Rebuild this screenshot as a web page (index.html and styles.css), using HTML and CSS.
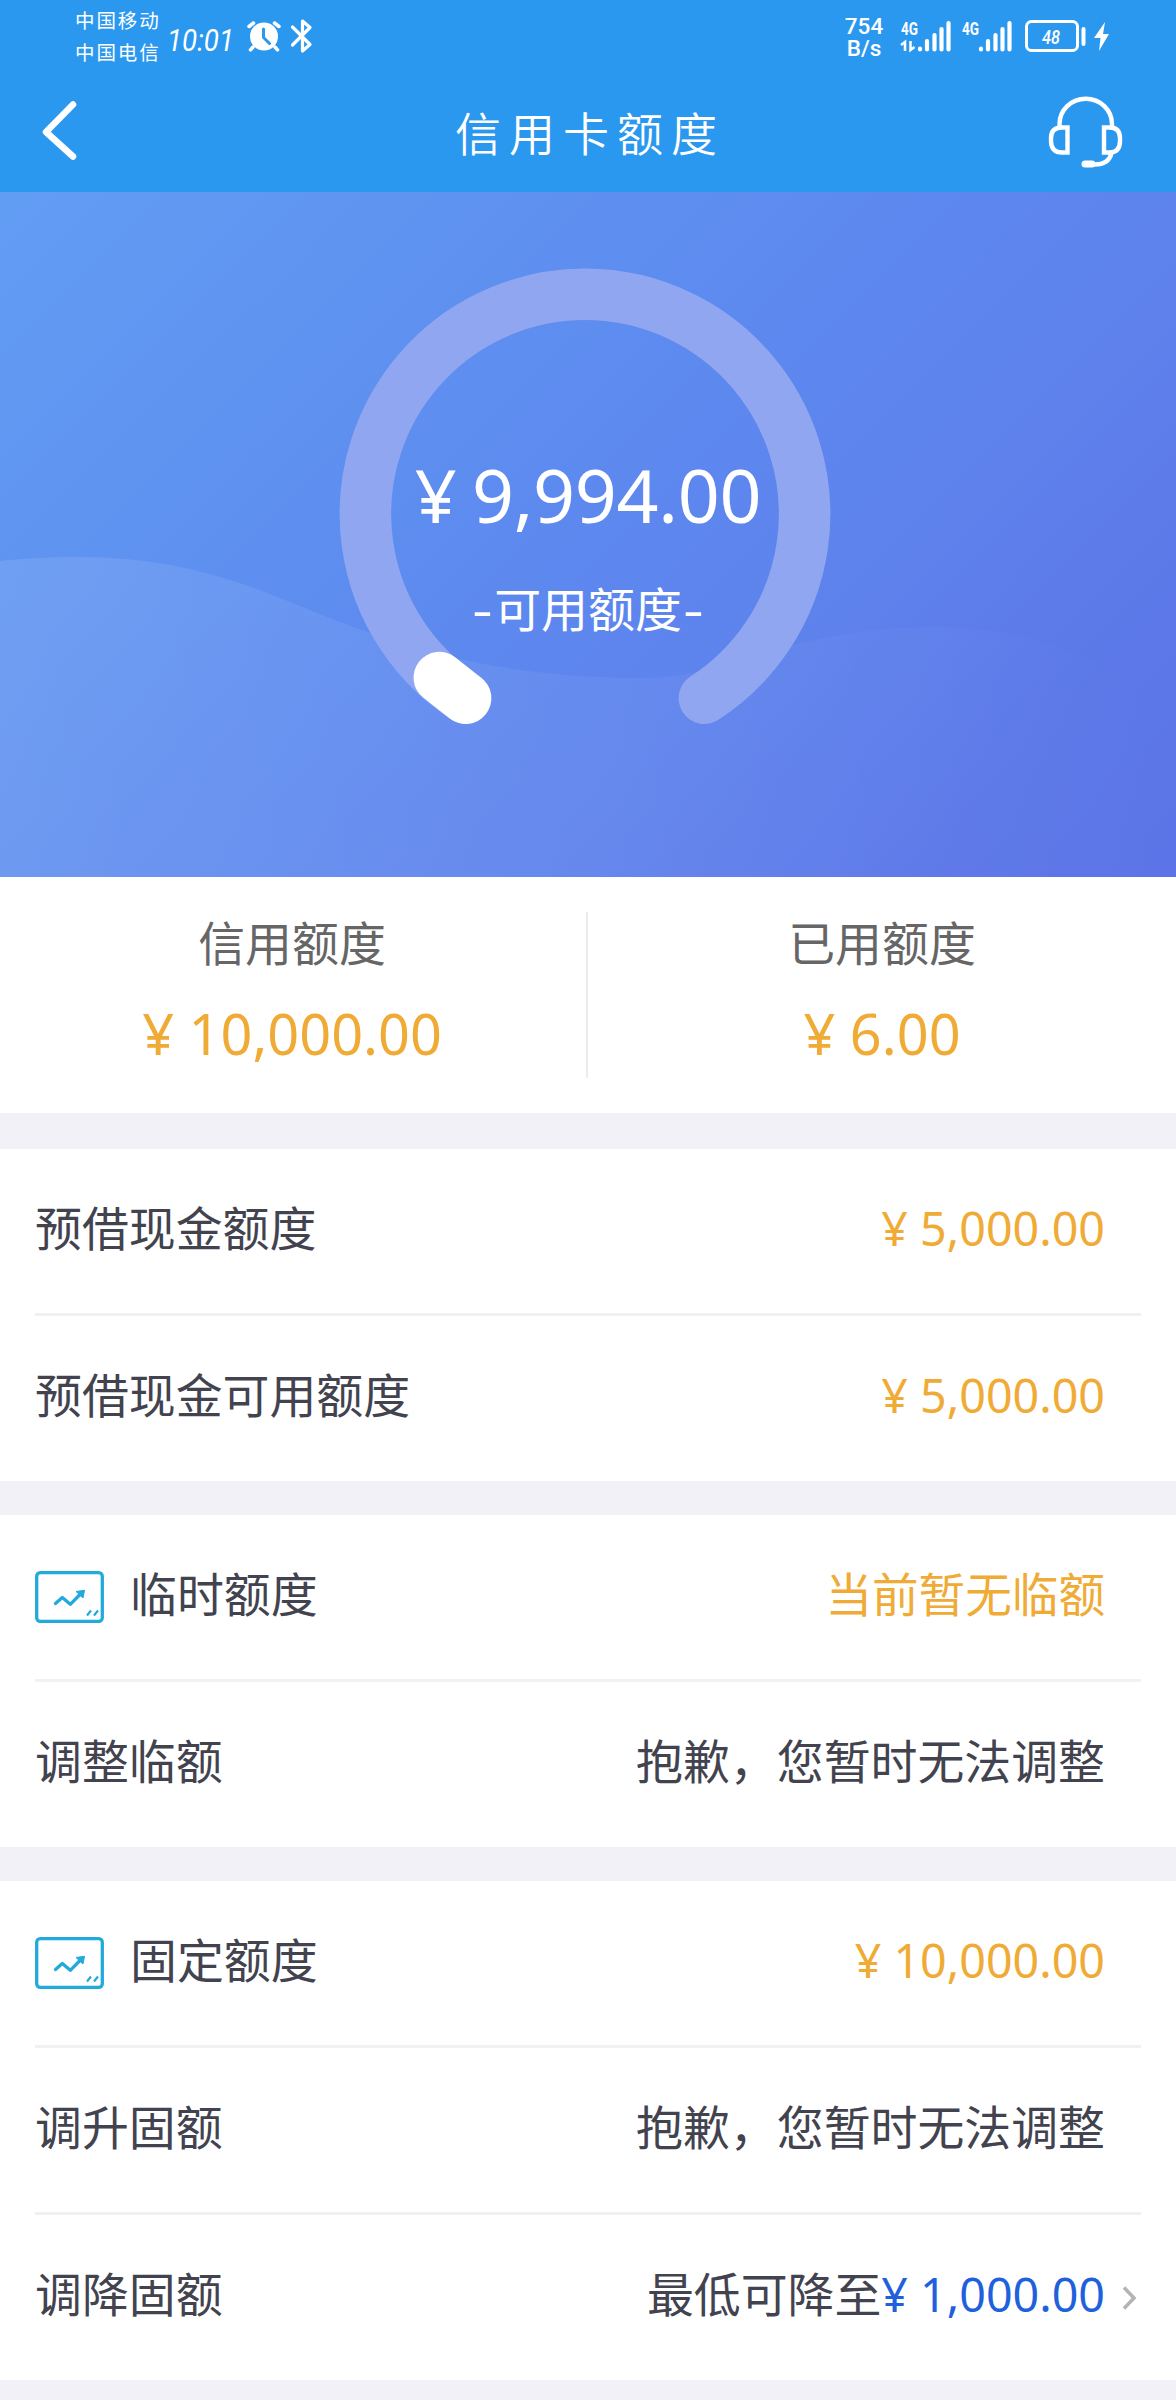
FILE: index.html
```html
<!DOCTYPE html>
<html lang="zh-CN">
<head>
<meta charset="utf-8">
<title>信用卡额度</title>
<link rel="stylesheet" href="styles.css">
</head>
<body>
<header class="top">
  <div class="status">
    <div class="carriers"><span>中国移动</span><span>中国电信</span></div>
    <svg class="clock" width="70" height="40"><text x="1" y="30" textLength="67" lengthAdjust="spacingAndGlyphs">10:01</text></svg>
    <svg class="alarm" width="34" height="32" viewBox="0 0 34 32"><circle cx="17" cy="16.500" r="14" fill="#fff"/><path d="M2 6.500l4.500-3.500M32 6.500l-4.500-3.500M6 27l-2.500 2.800M28 27l2.500 2.800" stroke="#fff" stroke-width="3.500" stroke-linecap="round"/><path d="M16.500 9v8.500l6 6" fill="none" stroke="#2b98f0" stroke-width="3" stroke-linecap="round"/></svg>
    <svg class="bluetooth" width="24" height="36" viewBox="0 0 24 36"><path d="M2.500 9L20 26.500 12.500 33V3L20 9.500 2.500 27" fill="none" stroke="#fff" stroke-width="3.200" stroke-linecap="round" stroke-linejoin="round"/></svg>
    <div class="speed"><span>754</span><span>B/s</span></div>
    <svg class="signal" width="52" height="38" viewBox="0 -4 52 38"><text x="1" y="15" textLength="17" lengthAdjust="spacingAndGlyphs">4G</text><path d="M1 25l4-3v9M10.500 21v9l4-3" fill="none" stroke="#fff" stroke-width="2.500"/><path d="M20 28.500v1M27 21v8.500M34.500 15v14.500M41.500 9v20.500M48.500 3v26.500" stroke="#fff" stroke-width="4.200" stroke-linecap="round"/></svg>
    <svg class="signal second" width="52" height="38" viewBox="0 -4 52 38"><text x="1" y="15" textLength="17" lengthAdjust="spacingAndGlyphs">4G</text><path d="M20 28.500v1M27 21v8.500M34.500 15v14.500M41.500 9v20.500M48.500 3v26.500" stroke="#fff" stroke-width="4.200" stroke-linecap="round"/></svg>
    <svg class="battery" width="86" height="34" viewBox="0 0 86 34"><rect x="1.500" y="2.500" width="51" height="29" rx="5" fill="none" stroke="#fff" stroke-width="3"/><path d="M58.500 10v15" stroke="#fff" stroke-width="4" stroke-linecap="round"/><path d="M80 3L69 19h6.500L74 32l10-17h-6z" fill="#fff"/><text x="17" y="25" textLength="18" lengthAdjust="spacingAndGlyphs">48</text></svg>
  </div>
  <nav class="nav">
    <svg class="back" width="40" height="66" viewBox="0 0 40 66"><path d="M34 6.500L7 34 34 58.500" fill="none" stroke="#fff" stroke-width="6.500" stroke-linecap="round" stroke-linejoin="round"/></svg>
    <h1>信用卡额度</h1>
    <svg class="service" width="76" height="72" viewBox="0 0 76 72" fill="none" stroke="#fff" stroke-width="4.400"><path d="M11.500 29v-2a26 25 0 0 1 52.500 0v2"/><path d="M19.500 30.500v25H14Q3 55.500 3 44v-3Q3 30.500 14 30.500zM56 30.500v25h5.500Q72 55.500 72 44v-3Q72 30.500 61.500 30.500z"/><path d="M63.500 56c-2 9-9 11.500-17 11.500"/><path d="M37 67h7" stroke-width="7" stroke-linecap="round"/></svg>
  </nav>
</header>

<section class="hero">
  <svg class="hero-art" width="1176" height="685" viewBox="0 0 1176 685">
    <defs>
      <linearGradient id="wave"><stop offset="0" stop-color="#fff" stop-opacity=".1"/><stop offset=".45" stop-color="#fff" stop-opacity=".055"/><stop offset="1" stop-color="#fff" stop-opacity="0"/></linearGradient>
    </defs>
    <path d="M0 369C130 357 200 373 300 414C395 453 490 486 640 486C740 486 780 435 940 435C1040 435 1110 480 1176 500V685H0z" fill="url(#wave)"/>
    <path d="M465.600 506.200A219.600 219.600 0 1 1 704.400 506.200" fill="none" stroke="#91a6f1" stroke-width="51.500" stroke-linecap="round"/>
    <path d="M465.600 506.200L439.300 485.600" fill="none" stroke="#fff" stroke-width="51.500" stroke-linecap="round"/>
  </svg>
  <div class="available">
    <strong>¥ <span class="figure">9,994.00</span></strong>
    <span class="caption"><i>-</i>可用额度<i>-</i></span>
  </div>
</section>

<section class="summary">
  <div class="total"><span>信用额度</span><b>¥ 10,000.00</b></div>
  <div class="total"><span>已用额度</span><b>¥ 6.00</b></div>
</section>

<section class="group">
  <div class="row"><span>预借现金额度</span><span class="gold">¥ 5,000.00</span></div>
  <div class="row"><span>预借现金可用额度</span><span class="gold">¥ 5,000.00</span></div>
</section>

<section class="group">
  <div class="row">
    <span class="label"><svg width="69" height="52" viewBox="0 0 69 52" fill="none" stroke="#22aadb" stroke-width="3.300"><rect x="1.700" y="1.700" width="65.600" height="48.600" rx="3.500"/><path d="M20.500 32.500L27.300 26.500 35.300 33.300 45 23.500" stroke-linecap="round" stroke-linejoin="round"/><path d="M41 20.500l8.500-1.200-1.500 7.700z" fill="#22aadb" stroke="#22aadb" stroke-width="1"/><path d="M52 44.500l4-5M59 44.500l4-5" stroke-width="2.200"/></svg>临时额度</span>
    <span class="gold">当前暂无临额</span>
  </div>
  <div class="row"><span>调整临额</span><span>抱歉，您暂时无法调整</span></div>
</section>

<section class="group fixed">
  <div class="row">
    <span class="label"><svg width="69" height="52" viewBox="0 0 69 52" fill="none" stroke="#22aadb" stroke-width="3.300"><rect x="1.700" y="1.700" width="65.600" height="48.600" rx="3.500"/><path d="M20.500 32.500L27.300 26.500 35.300 33.300 45 23.500" stroke-linecap="round" stroke-linejoin="round"/><path d="M41 20.500l8.500-1.200-1.500 7.700z" fill="#22aadb" stroke="#22aadb" stroke-width="1"/><path d="M52 44.500l4-5M59 44.500l4-5" stroke-width="2.200"/></svg>固定额度</span>
    <span class="gold">¥ 10,000.00</span>
  </div>
  <div class="row"><span>调升固额</span><span>抱歉，您暂时无法调整</span></div>
  <div class="row link"><span>调降固额</span><span>最低可降至<em>¥ 1,000.00</em></span><svg class="chevron" width="16" height="26" viewBox="0 0 16 26"><path d="M3 2.500L13 13 3 23.500" fill="none" stroke="#b4b4b6" stroke-width="3.500"/></svg></div>
</section>
</body>
</html>
```
FILE: styles.css
```css
* { box-sizing: border-box; }

body {
  margin: 0;
  width: 1176px;
  height: 2400px;
  overflow: hidden;
  background: #f1f1f7;
  color: #42434f;
  font: 46.900px/1.2 "Noto Sans", "Noto Sans CJK SC", sans-serif;
}

svg { display: block; flex: none; overflow: visible; }

.top { height: 192px; background: #2b98f0; color: #fff; }

.status {
  display: flex;
  align-items: flex-start;
  height: 72px;
  padding-left: 75px;
}
.status text { fill: #fff; font-family: Roboto, sans-serif; }

.carriers {
  display: flex;
  flex-direction: column;
  width: 91px;
  padding-top: 4px;
  font: 19.500px/32px "Noto Sans CJK SC", sans-serif;
  letter-spacing: 1.900px;
  white-space: nowrap;
}
.clock { margin-top: 21px; font-size: 32px; font-style: italic; }
.alarm { margin: 20px 0 0 11px; }
.bluetooth { margin: 18px 0 0 9px; }
.speed {
  display: flex;
  flex-direction: column;
  align-items: center;
  width: 40px;
  margin: 15px 0 0 530px;
  font: 500 22.500px/22px Roboto, sans-serif;
}
.signal { margin: 16px 0 0 16px; font-size: 18px; font-weight: 700; }
.signal.second { margin-left: 9px; }
.battery { margin: 19px 0 0 12px; font-size: 20px; font-style: italic; font-weight: 500; }

.nav {
  display: flex;
  align-items: center;
  justify-content: space-between;
  height: 118px;
  padding: 0 52px 0 39px;
}
.nav h1 {
  margin: 0 0 0 53px;
  font: 350 46px/60px "Noto Sans CJK SC", sans-serif;
  letter-spacing: 8px;
}
.service { margin-top: 3px; }

.hero {
  display: grid;
  height: 685px;
  background: linear-gradient(135deg, #629df4 0%, #5f94f1 22%, #5d89ef 48%, #5e82ec 67%, #5c77e8 88%, #5b74e7 100%);
}
.hero-art { grid-area: 1 / 1; }
.available {
  grid-area: 1 / 1;
  z-index: 1;
  display: flex;
  flex-direction: column;
  align-items: center;
  padding-top: 251px;
  color: #fff;
}
.available strong { font-weight: 450; font-size: 73.500px; line-height: 104px; word-spacing: -4px; }
.figure { letter-spacing: -.3px; }
.caption { display: flex; margin-top: 34px; line-height: 56px; }
.caption i { width: 23px; text-align: center; font-style: normal; transform: scaleX(1.35); }

.summary {
  display: grid;
  grid-template-columns: 588px 1fr;
  height: 236px;
  padding: 35px 0;
  background: #fff;
}
.total { display: flex; flex-direction: column; align-items: center; color: #666; }
.total:first-child { padding-right: 2px; border-right: 2px solid #ececee; }
.total:last-child { padding-right: 10px; padding-left: 10px; }
.total span { line-height: 62px; }
.total b { margin-top: 20px; color: #efab35; font-size: 55.800px; font-weight: 450; line-height: 78px; }

.group { height: 332px; margin-top: 34px; padding: 0 35px; background: #fff; }
.summary + .group { margin-top: 36px; }
.group.fixed { height: 499px; }

.row {
  display: flex;
  align-items: center;
  justify-content: space-between;
  height: 167px;
  padding: 0 36px 5px 0;
  white-space: nowrap;
}
.row:first-child { height: 164px; padding-bottom: 5px; }
.row + .row { border-top: 3px solid #f1f1f3; }
.label { display: flex; align-items: center; gap: 26px; }
.label svg { margin-top: 4px; }
.gold { color: #efab35; }
.gold, .row em { font-size: 46.600px; }
.row em { color: #1f61dc; font-style: normal; }
.row.link { padding-right: 4px; }
.link > :nth-child(2) { margin-left: auto; }
.chevron { margin: 6px 0 0 16px; }
```
